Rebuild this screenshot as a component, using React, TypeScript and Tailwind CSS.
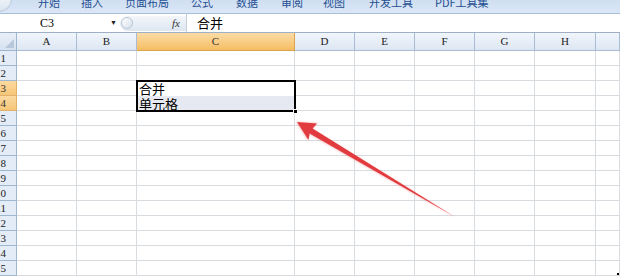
import React from "react";

const cols = [
  { n: "A", w: 60 },
  { n: "B", w: 60 },
  { n: "C", w: 158 },
  { n: "D", w: 60 },
  { n: "E", w: 60 },
  { n: "F", w: 60 },
  { n: "G", w: 60 },
  { n: "H", w: 61 },
  { n: "", w: 24 },
];

const tabs = [
  { t: "开始", ml: 38 },
  { t: "插入", ml: 21 },
  { t: "页面布局", ml: 22 },
  { t: "公式", ml: 22 },
  { t: "数据", ml: 23 },
  { t: "审阅", ml: 23 },
  { t: "视图", ml: 20 },
  { t: "开发工具", ml: 24 },
  { t: "PDF工具集", ml: 22 },
];

const serif = { fontFamily: '"Liberation Serif", "Noto Sans CJK SC", serif' };
const cjk = { fontFamily: '"Noto Sans CJK SC", "Noto Sans", sans-serif' };

export default function App() {
  const rows = Array.from({ length: 15 }, (_, i) => i + 1);
  return (
    <div className="relative w-[620px] h-[276px] overflow-hidden bg-white">
      {/* Ribbon strip */}
      <div className="relative h-[14px] flex items-start overflow-hidden bg-gradient-to-b from-[#cfdef1] to-[#dbe7f6] border-b border-[#a9bfd9]">
        <div className="absolute -left-[14px] -top-[14px] w-[26px] h-[26px] rounded-full border border-[#b9c8db] bg-gradient-to-b from-[#ffffff] to-[#dbe4ef]" />
        {tabs.map((t) => (
          <span
            key={t.t}
            className="text-[11px] leading-[11px] text-[#1f4f91] -mt-[3px] whitespace-nowrap"
            style={{ ...cjk, marginLeft: t.ml }}
          >
            {t.t}
          </span>
        ))}
      </div>
      {/* Formula bar */}
      <div className="h-[19px] flex items-center bg-white border-b border-[#9fb0c6]">
        <div className="w-[120px] h-full flex items-center relative">
          <span className="ml-[40px] text-[12px] text-black" style={serif}>C3</span>
          <span className="ml-auto mr-[3px] text-[7px] text-[#222]">▼</span>
        </div>
        <div className="relative w-[66px] h-[15px] rounded-l-full bg-gradient-to-b from-[#f3f6fa] to-[#dde6f1] flex items-center">
          <div className="w-[12px] h-[12px] ml-[1px] rounded-full border border-[#b8c6d6] bg-gradient-to-br from-white to-[#d7e0ea]" />
          <span className="ml-auto mr-[6px] text-[11px] italic text-[#333]" style={serif}>fx</span>
        </div>
        <div className="w-px h-full bg-[#c6d0dc]" />
        <span className="ml-[10px] text-[13px] text-black" style={cjk}>合并</span>
      </div>
      {/* Grid */}
      <div
        className="grid"
        style={{
          gridTemplateColumns: `17px ${cols.map((c) => c.w + "px").join(" ")}`,
          gridTemplateRows: "18px repeat(15, 15px)",
        }}
      >
        <div className="border-r border-b border-[#9eb6ce] bg-gradient-to-b from-[#e9eff8] to-[#d7e2f0] flex items-end justify-end p-[2px]">
          <div className="w-0 h-0 border-l-[9px] border-l-transparent border-b-[9px] border-b-[#b7c7dc]" />
        </div>
        {cols.map((c) => (
          <div
            key={"h" + c.n}
            className={
              "border-r border-b flex items-center justify-center text-[11px] " +
              (c.n === "C"
                ? "bg-gradient-to-b from-[#fbdca6] to-[#f5bd62] border-[#d9a24c] text-[#333]"
                : "bg-gradient-to-b from-[#f1f5fb] to-[#dde7f3] border-[#a9bcd3] text-[#222]")
            }
            style={serif}
          >
            {c.n}
          </div>
        ))}
        {rows.map((r) => (
          <React.Fragment key={r}>
            <div
              className={
                "border-r border-b overflow-hidden flex items-center justify-end pr-[10px] text-[11px] " +
                (r === 3 || r === 4
                  ? "bg-gradient-to-b from-[#fbd9a0] to-[#f6c677] border-[#e1b06a] text-[#333]"
                  : "bg-[#e4ecf7] border-[#9eb6ce] text-[#222]")
              }
              style={serif}
            >
              {r}
            </div>
            {cols.map((c) =>
              c.n === "C" && (r === 3 || r === 4) ? (
                r === 3 ? (
                  <div
                    key={c.n + r}
                    className="row-span-2 relative flex flex-col bg-white"
                    style={cjk}
                  >
                    <div className="h-[15px] flex items-center pl-[2px] text-[13px] leading-[13px] text-black">合并</div>
                    <div className="h-[15px] flex items-center pl-[2px] text-[13px] leading-[13px] text-black bg-[#e6e9f2]">单元格</div>
                    <div className="absolute -left-px -top-px -right-px -bottom-px border-2 border-black pointer-events-none" />
                    <div className="absolute -right-[3px] -bottom-[3px] w-[5px] h-[5px] bg-black border border-white" />
                  </div>
                ) : null
              ) : (
                <div key={c.n + r} className="border-r border-b border-[#d8dbe0]" />
              )
            )}
          </React.Fragment>
        ))}
      </div>
      {/* Red arrow annotation */}
      <svg className="absolute left-0 top-0 pointer-events-none" width="620" height="276" viewBox="0 0 620 276">
        <defs>
          <filter id="glow" x="-20%" y="-20%" width="140%" height="140%">
            <feGaussianBlur stdDeviation="0.8" />
          </filter>
        </defs>
        <g filter="url(#glow)" opacity="0.5">
          <polygon points="296,122 318,123 312,129 456,218 309,134 308,141" fill="#f07a7a" />
        </g>
        <polygon points="297,122 317,123.5 312.6,128.6 455,217 309.6,133.6 308.5,140" fill="#e23b3f" />
      </svg>
      <div className="absolute right-[1px] bottom-[1px] w-[2px] h-[2px] bg-black" />
    </div>
  );
}
